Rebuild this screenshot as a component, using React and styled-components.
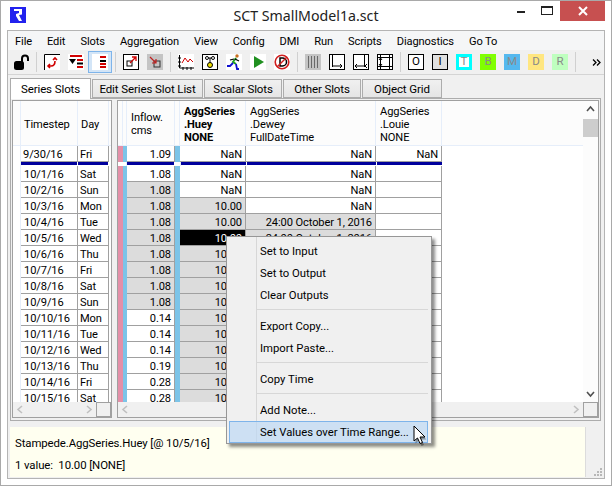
import styled, { createGlobalStyle } from "styled-components";

const GlobalStyle = createGlobalStyle`
  html, body { margin: 0; padding: 0; background: #fff; }
  * { box-sizing: border-box; }
`;

const Window = styled.div`
  position: relative;
  width: 612px;
  height: 486px;
  overflow: hidden;
  display: flex;
  flex-direction: column;
  background: #fff;
  border: 1px solid #a9a9a9;
  font-family: Roboto, "Noto Sans", sans-serif;
  font-size: 11.1px;
  letter-spacing: -0.1px;
  color: #000;
`;

const TitleBar = styled.div`
  height: 29px;
  flex: none;
  display: grid;
  grid-template-columns: 1fr auto 1fr;
`;

const Logo = styled.svg`
  width: 16px;
  height: 16px;
  margin: 6px 0 0 9px;
`;

const Title = styled.div`
  font-family: "Noto Sans", sans-serif;
  font-size: 14.2px;
  letter-spacing: 0;
  line-height: 29px;
  color: #222;
`;

const WinControls = styled.div`
  display: flex;
  justify-content: flex-end;
  margin-right: 6px;
`;

const WinBtn = styled.div`
  width: 26px;
  height: 20px;
  display: flex;
  align-items: center;
  justify-content: center;
`;

const CloseBtn = styled(WinBtn)`
  width: 45px;
  background: #c75050;
`;

const Client = styled.div`
  flex: 1;
  margin: 0 6px 6px 6px;
  border: 1px solid #b4b4b4;
  background: #f0f0f0;
  display: flex;
  flex-direction: column;
  min-height: 0;
`;

const MenuBar = styled.div`
  height: 19px;
  flex: none;
  background: #f5f6f7;
  display: flex;
  align-items: center;
  gap: 15px;
  padding: 2px 0 0 7px;
`;

const Toolbar = styled.div`
  height: 25px;
  flex: none;
  display: flex;
  align-items: center;
  padding-left: 1px;
  border-bottom: 1px solid #d4d4d4;
`;

const ToolBtn = styled.div`
  width: 24px;
  height: 22px;
  flex: none;
  display: flex;
  align-items: center;
  justify-content: center;
  border: 1px solid ${(p) => (p.$active ? "#7eb4ea" : "transparent")};
  background: ${(p) => (p.$active ? "#d3e5f7" : "transparent")};
`;

const ToolSep = styled.div`
  width: 1px;
  height: 20px;
  flex: none;
  margin: 0 3px;
  background: #d0d0d0;
`;

const Icon = styled.svg`
  width: 16px;
  height: 16px;
  display: block;
`;

const LetterBox = styled.div`
  width: 16px;
  height: 16px;
  display: flex;
  align-items: center;
  justify-content: center;
  font-size: 11.5px;
  line-height: 1;
  color: ${(p) => p.$color || "#8a8a8a"};
  background: ${(p) => p.$bg};
  border: ${(p) => p.$border || "none"};
`;

const More = styled.svg`
  width: 9px;
  height: 7px;
  margin-left: 13px;
`;

const TabRow = styled.div`
  height: 21px;
  flex: none;
  margin-top: 2px;
  padding-left: 2px;
  display: flex;
  align-items: flex-end;
  gap: 1px;
`;

const Tab = styled.div`
  width: ${(p) => p.$w}px;
  height: ${(p) => (p.$active ? 21 : 19)}px;
  display: flex;
  align-items: center;
  justify-content: center;
  font-size: 11.5px;
  border: 1px solid #acacac;
  border-bottom: ${(p) => (p.$active ? "none" : "1px solid #acacac")};
  background: ${(p) => (p.$active ? "#fff" : "linear-gradient(#f0f0f0, #e5e5e5)")};
  margin-bottom: ${(p) => (p.$active ? "-1px" : "0")};
  position: relative;
  z-index: ${(p) => (p.$active ? 1 : 0)};
`;

const Pane = styled.div`
  height: 323px;
  flex: none;
  margin-left: 2px;
  width: 591px;
  border: 1px solid #acacac;
  padding: 1px 1px 2px 1px;
  display: flex;
  gap: 5px;
  background: #f0f0f0;
`;

const TableFrame = styled.div`
  width: ${(p) => p.$w}px;
  flex: none;
  border: 1px solid #a0a0a0;
  background: #fff;
  display: grid;
  grid-template-columns: 1fr 15px;
  grid-template-rows: 1fr 15px;
`;

const Body = styled.div`
  min-width: 0;
  min-height: 0;
  overflow: hidden;
  grid-column: ${(p) => (p.$full ? "1 / -1" : "auto")};
`;

const HeaderRow = styled.div`
  height: 45px;
  display: flex;
  background: #fcfcfc;
  border-bottom: 1px solid #e6eefa;
`;

const HeaderCell = styled.div`
  width: ${(p) => p.$w}px;
  flex: none;
  display: flex;
  flex-direction: column;
  justify-content: center;
  padding-top: 2px;
  padding-left: ${(p) => p.$pad ?? 3}px;
  line-height: 13px;
  font-weight: ${(p) => (p.$bold ? 700 : 400)};
  border-right: 1px solid #e6eefa;
`;

const Row = styled.div`
  height: 16px;
  display: flex;
`;

const Cell = styled.div`
  width: ${(p) => p.$w}px;
  flex: none;
  height: 16px;
  line-height: 17px;
  padding: 0 ${(p) => (p.$right ? 3 : 2)}px 0 ${(p) => p.$pad ?? 3}px;
  white-space: nowrap;
  overflow: hidden;
  text-align: ${(p) => (p.$right ? "right" : "left")};
  background: ${(p) => p.$bg || "#fff"};
  color: ${(p) => (p.$bg === "#000" ? "#fff" : "#000")};
  border-right: 1px solid #a0a0a0;
  border-bottom: 1px solid #a0a0a0;
`;

const Stub = styled.div`
  width: ${(p) => p.$w}px;
  flex: none;
  background: ${(p) => p.$bg || "#fff"};
  border-right: ${(p) => (p.$bg ? "none" : "1px solid #e6eefa")};
`;

const FrozenLine = styled.div`
  height: 4px;
  display: flex;
`;

const NavyBar = styled.div`
  width: ${(p) => p.$w}px;
  flex: none;
  height: 3px;
  background: #00009c;
  margin-right: 1px;
`;

const HScroll = styled.div`
  display: flex;
  align-items: center;
  justify-content: space-between;
  padding: 0 3px;
  background: #f0f0f0;
`;

const VScroll = styled.div`
  display: flex;
  flex-direction: column;
  align-items: center;
  background: #fcfcfc;
`;

const Thumb = styled.div`
  width: 15px;
  height: 18px;
  margin-top: 1px;
  background: #cdcdcd;
`;

const Arrow = styled.svg`
  width: 9px;
  height: 9px;
  display: block;
`;

const ArrowSlot = styled.div`
  height: 17px;
  display: flex;
  align-items: center;
  margin-top: ${(p) => (p.$end ? "auto" : "0")};
`;

const Corner = styled.div`
  background: #f0f0f0;
  border: 1px solid #a0a0a0;
`;

const StatusArea = styled.div`
  flex: 1;
  display: flex;
  margin-top: 6px;
  min-height: 0;
`;

const Note = styled.div`
  width: 576px;
  margin-left: 2px;
  margin-bottom: 1px;
  padding: 5px 5px 0;
  background: #fffff0;
  border-right: 1px solid #dcdcdc;
  font-size: 11.4px;
  line-height: 22px;
`;

const Grip = styled.svg`
  width: 8px;
  height: 8px;
  margin: auto 2px 2px auto;
`;

const ContextMenu = styled.div`
  position: absolute;
  left: 225px;
  top: 235px;
  width: 206px;
  height: 208px;
  padding: 3px 3px 0 2px;
  border: 1px solid #979797;
  font-size: 11.3px;
  letter-spacing: 0;
  background:
    linear-gradient(to right, transparent 29px, #d7d7d7 29px, #d7d7d7 30px, transparent 30px),
    #f0f0f0;
  box-shadow: 3px 3px 3px rgba(0, 0, 0, 0.45);
`;

const MenuItem = styled.div`
  height: 22px;
  line-height: 22px;
  padding-left: 30px;
  border: 1px solid ${(p) => (p.$hot ? "#7eb4ea" : "transparent")};
  background: ${(p) => (p.$hot ? "rgba(190, 217, 243, 0.7)" : "transparent")};
`;

const MenuSep = styled.div`
  height: 1px;
  margin: 3px 0 5px 28px;
  background: #d7d7d7;
`;

const Cursor = styled.svg`
  position: absolute;
  left: 412px;
  top: 424px;
  width: 18px;
  height: 24px;
`;

const dates = [
  ["10/1/16", "Sat", "1.08"],
  ["10/2/16", "Sun", "1.08"],
  ["10/3/16", "Mon", "1.08"],
  ["10/4/16", "Tue", "1.08"],
  ["10/5/16", "Wed", "1.08"],
  ["10/6/16", "Thu", "1.08"],
  ["10/7/16", "Fri", "1.08"],
  ["10/8/16", "Sat", "1.08"],
  ["10/9/16", "Sun", "1.08"],
  ["10/10/16", "Mon", "0.14"],
  ["10/11/16", "Tue", "0.14"],
  ["10/12/16", "Wed", "0.14"],
  ["10/13/16", "Thu", "0.19"],
  ["10/14/16", "Fri", "0.28"],
  ["10/15/16", "Sat", "0.28"],
];

const GRAY = "#dcdcdc";
const PINK = "#e48fa8";
const BLUE = "#7cc4e8";

const tabs = [
  ["Series Slots", 81, true],
  ["Edit Series Slot List", 111],
  ["Scalar Slots", 78],
  ["Other Slots", 78],
  ["Object Grid", 80],
];

const menus = ["File", "Edit", "Slots", "Aggregation", "View", "Config", "DMI", "Run", "Scripts", "Diagnostics", "Go To"];

const Lock = () => (
  <Icon viewBox="0 0 16 16">
    <path d="M9 8V4.500a3 3 0 0 1 6 0V7" fill="none" stroke="#000" strokeWidth="2" />
    <rect x="1" y="7" width="10" height="9" rx="2.500" fill="#000" />
  </Icon>
);

const SwapIcon = () => (
  <Icon viewBox="0 0 16 16">
    <rect width="16" height="16" fill="#fff" />
    <path d="M.5 16V.5H16" fill="none" stroke="#000" />
    <path d="M4 12h3c3 0 4-2 4-5M9 6l2-2 2 2M6 10l-2 2 2 2" fill="none" stroke="#d00000" strokeWidth="1.600" />
  </Icon>
);

const FilterIcon = () => (
  <Icon viewBox="0 0 16 16">
    <rect width="16" height="16" fill="#fff" />
    <rect x="2" y="1" width="12" height="2" fill="#d00000" />
    <path d="M1 5h7L4.500 10z" fill="#000" />
    <rect x="9" y="5" width="6" height="2" fill="#d00000" />
    <rect x="9" y="8.500" width="6" height="2" fill="#000" />
    <rect x="9" y="12" width="6" height="2" fill="#d00000" />
  </Icon>
);

const BarsIcon = () => (
  <Icon viewBox="0 0 16 16">
    <rect width="16" height="16" fill="#fff" />
    <rect x="8" y="2" width="6" height="2" fill="#d00000" />
    <rect x="8" y="6" width="6" height="2" fill="#000" />
    <rect x="8" y="9" width="6" height="2" fill="#d00000" />
    <rect x="8" y="12" width="6" height="2" fill="#d00000" />
  </Icon>
);

const OpenBoxIcon = () => (
  <Icon viewBox="0 0 16 16">
    <rect x=".5" y=".5" width="15" height="15" fill="#fff" stroke="#000" />
    <rect x="4" y="7" width="5" height="5" fill="none" stroke="#000" />
    <path d="M7 9l6-6M9 3h4v4" fill="none" stroke="#d00000" strokeWidth="1.300" />
  </Icon>
);

const GrayBoxIcon = () => (
  <Icon viewBox="0 0 16 16">
    <rect width="16" height="16" fill="#c4c4c4" />
    <rect x="7" y="7" width="6" height="6" fill="none" stroke="#333" />
    <path d="M3 3l6 6M9 5v4H5" fill="none" stroke="#c02020" strokeWidth="1.200" />
  </Icon>
);

const ChartIcon = () => (
  <Icon viewBox="0 0 16 16">
    <rect width="16" height="16" fill="#fff" />
    <path d="M1.500 1v13H16M0 12h3M0 8h3M0 4h3M5 16v-3M9 16v-3M13 16v-3" fill="none" stroke="#000" />
    <path d="M4 9l3-5 3 4 2-3 3 3" fill="none" stroke="#d00000" />
  </Icon>
);

const GaugeIcon = () => (
  <Icon viewBox="0 0 16 16">
    <rect x=".5" y=".5" width="15" height="15" fill="#fff" stroke="#000" />
    <circle cx="5" cy="4" r="1.500" fill="none" stroke="#000" />
    <circle cx="11" cy="4" r="1.500" fill="none" stroke="#000" />
    <path d="M6.500 4h3M8 4v5" stroke="#000" />
    <circle cx="8" cy="11" r="2.500" fill="#f0e000" stroke="#000" />
  </Icon>
);

const RunnerIcon = () => (
  <Icon viewBox="0 0 16 16">
    <rect width="16" height="16" fill="#fff" />
    <circle cx="11" cy="2" r="1.700" fill="#c87020" />
    <path d="M10 4L7 8l3 2" fill="none" stroke="#20a020" strokeWidth="2" />
    <path d="M9 5l4 2M8 5L4 6" fill="none" stroke="#000" strokeWidth="1.200" />
    <path d="M7 9l-3 3H1M10 10l1 5h2" fill="none" stroke="#1010d0" strokeWidth="1.800" />
  </Icon>
);

const PlayIcon = () => (
  <Icon viewBox="0 0 16 16">
    <rect width="16" height="16" fill="#fff" />
    <path d="M4 2l10 6-10 6z" fill="#209020" />
  </Icon>
);

const StopIcon = () => (
  <Icon viewBox="0 0 16 16">
    <rect width="16" height="16" fill="#fff" />
    <circle cx="8" cy="8" r="6.800" fill="none" stroke="#d02020" strokeWidth="1.600" />
    <path d="M6 4h2.500a4 4 0 0 1 0 8H6z" fill="none" stroke="#000" strokeWidth="1.500" />
    <path d="M3 13L13 3" stroke="#d02020" strokeWidth="1.400" />
  </Icon>
);

const ColumnsIcon = () => (
  <Icon viewBox="0 0 16 16">
    <rect width="16" height="16" fill="#c4c4c4" />
    <path d="M3.500 2v12M6.500 2v12M9.500 2v12M12.500 2v12" stroke="#6a6a6a" />
  </Icon>
);

const WidthIcon = ({ variant }) => (
  <Icon viewBox="0 0 16 16">
    <rect x=".5" y=".5" width="15" height="15" fill="#fff" stroke="#000" />
    {variant === "grow" && <path d="M3.500 1v12M4 12h9M11 10l2 2-2 2" fill="none" stroke="#000" />}
    {variant === "shrink" && <path d="M11.500 1v12M2 12h9M4 10l-2 2 2 2M14 10l-2 2 2 2" fill="none" stroke="#000" />}
    {variant === "both" && (
      <path d="M3.500 1v14M12.500 1v14M1 3.500h14M1 12.500h14M6 3.500h4M6 12.500h4M5 6l-1.500-2L2 6M5 10l-1.500 2L2 10" fill="none" stroke="#000" />
    )}
  </Icon>
);

const ToolGroup = ({ icons }) =>
  icons.map((node, i) => (
    <ToolBtn key={i} $active={node.active}>
      {node.el}
    </ToolBtn>
  ));

const Chevron = ({ d, color }) => (
  <Arrow viewBox="0 0 9 9">
    <path d={d} fill="none" stroke={color} strokeWidth="1.600" />
  </Arrow>
);

const LEFT = "M6 1L2 4.500 6 8";
const RIGHT = "M3 1l4 3.500L3 8";
const UP = "M1 6l3.500-4L8 6";
const DOWN = "M1 3l3.500 4L8 3";

function LeftTable() {
  return (
    <TableFrame $w={100}>
      <Body $full>
        <HeaderRow>
          <HeaderCell $w={8} />
          <HeaderCell $w={57}>Timestep</HeaderCell>
          <HeaderCell $w={31}>Day</HeaderCell>
        </HeaderRow>
        <Row>
          <Stub $w={8} />
          <Cell $w={57} $pad={2}>9/30/16</Cell>
          <Cell $w={31} $pad={2}>Fri</Cell>
        </Row>
        <FrozenLine>
          <Stub $w={8} />
          <NavyBar $w={56} />
          <NavyBar $w={30} />
        </FrozenLine>
        {dates.map(([d, day]) => (
          <Row key={d}>
            <Stub $w={8} />
            <Cell $w={57}>{d}</Cell>
            <Cell $w={31} $pad={2}>{day}</Cell>
          </Row>
        ))}
      </Body>
      <HScroll>
        <Chevron d={LEFT} color="#c0c0c0" />
        <Chevron d={RIGHT} color="#c0c0c0" />
      </HScroll>
      <Corner />
    </TableFrame>
  );
}

function RightTable() {
  return (
    <TableFrame $w={482}>
      <Body>
        <HeaderRow>
          <HeaderCell $w={5} />
          <HeaderCell $w={4} />
          <HeaderCell $w={48} $pad={4}>
            <span>Inflow.</span>
            <span>cms</span>
          </HeaderCell>
          <HeaderCell $w={5} />
          <HeaderCell $w={66} $pad={4} $bold>
            <span>AggSeries</span>
            <span>.Huey</span>
            <span>NONE</span>
          </HeaderCell>
          <HeaderCell $w={130} $pad={4}>
            <span>AggSeries</span>
            <span>.Dewey</span>
            <span>FullDateTime</span>
          </HeaderCell>
          <HeaderCell $w={66} $pad={4}>
            <span>AggSeries</span>
            <span>.Louie</span>
            <span>NONE</span>
          </HeaderCell>
        </HeaderRow>
        <Row>
          <Stub $w={5} $bg={PINK} />
          <Stub $w={4} $bg={BLUE} />
          <Cell $w={48} $right>1.09</Cell>
          <Stub $w={5} $bg={BLUE} />
          <Cell $w={66} $right>NaN</Cell>
          <Cell $w={130} $right>NaN</Cell>
          <Cell $w={66} $right>NaN</Cell>
        </Row>
        <FrozenLine>
          <Stub $w={9} />
          <NavyBar $w={47} />
          <Stub $w={6} />
          <NavyBar $w={65} />
          <NavyBar $w={129} />
          <NavyBar $w={65} />
        </FrozenLine>
        {dates.map(([d, , flow], i) => {
          const huey = i < 2 ? "NaN" : "10.00";
          const hueyBg = i < 2 ? "#fff" : i === 4 ? "#000" : GRAY;
          const dewey = i < 3 ? "NaN" : i < 5 ? "24:00 October 1, 2016" : "";
          return (
            <Row key={d}>
              <Stub $w={5} $bg={PINK} />
              <Stub $w={4} $bg={BLUE} />
              <Cell $w={48} $right $bg={i > 0 && i < 9 ? GRAY : "#fff"}>{flow}</Cell>
              <Stub $w={5} $bg={BLUE} />
              <Cell $w={66} $right $bg={hueyBg}>{huey}</Cell>
              <Cell $w={130} $right $bg={i === 3 || i === 4 ? GRAY : "#fff"}>{dewey}</Cell>
              <Cell $w={66} />
            </Row>
          );
        })}
      </Body>
      <VScroll>
        <ArrowSlot>
          <Chevron d={UP} color="#505050" />
        </ArrowSlot>
        <Thumb />
        <ArrowSlot $end>
          <Chevron d={DOWN} color="#505050" />
        </ArrowSlot>
      </VScroll>
      <HScroll>
        <Chevron d={LEFT} color="#c0c0c0" />
        <Chevron d={RIGHT} color="#c0c0c0" />
      </HScroll>
      <Corner />
    </TableFrame>
  );
}

export default function App() {
  return (
    <Window>
      <GlobalStyle />
      <TitleBar>
        <Logo viewBox="0 0 16 16">
          <rect width="16" height="16" fill="#2222ee" />
          <path d="M4 2h8v5.500L9 8l3 6H9L6 9V7l3-1V4H4z" fill="#fff" />
        </Logo>
        <Title>SCT SmallModel1a.sct</Title>
        <WinControls>
          <WinBtn>
            <svg width="10" height="10" viewBox="0 0 10 10">
              <rect x="1" y="5" width="8" height="2" fill="#222" />
            </svg>
          </WinBtn>
          <WinBtn>
            <svg width="12" height="10" viewBox="0 0 12 10">
              <rect x=".5" y="1" width="11" height="7.500" fill="none" stroke="#222" />
              <rect x="0" y="0" width="12" height="2" fill="#222" />
            </svg>
          </WinBtn>
          <CloseBtn>
            <svg width="10" height="10" viewBox="0 0 10 10">
              <path d="M1 1l8 8M9 1L1 9" stroke="#fff" strokeWidth="2" />
            </svg>
          </CloseBtn>
        </WinControls>
      </TitleBar>
      <Client>
        <MenuBar>
          {menus.map((m) => (
            <span key={m}>{m}</span>
          ))}
        </MenuBar>
        <Toolbar>
          <ToolBtn><Lock /></ToolBtn>
          <ToolSep />
          <ToolGroup
            icons={[
              { el: <SwapIcon /> },
              { el: <FilterIcon /> },
              { el: <BarsIcon />, active: true },
            ]}
          />
          <ToolSep />
          <ToolGroup icons={[{ el: <OpenBoxIcon /> }, { el: <GrayBoxIcon /> }]} />
          <ToolSep />
          <ToolGroup
            icons={[
              { el: <ChartIcon /> },
              { el: <GaugeIcon /> },
              { el: <RunnerIcon /> },
              { el: <PlayIcon /> },
              { el: <StopIcon /> },
            ]}
          />
          <ToolSep />
          <ToolGroup
            icons={[
              { el: <ColumnsIcon /> },
              { el: <WidthIcon variant="grow" /> },
              { el: <WidthIcon variant="shrink" /> },
              { el: <WidthIcon variant="both" /> },
            ]}
          />
          <ToolSep />
          <ToolBtn><LetterBox $bg="#fff" $color="#000" $border="1px solid #000">O</LetterBox></ToolBtn>
          <ToolBtn><LetterBox $bg="#e0e0e0" $color="#000" $border="1px solid #000">I</LetterBox></ToolBtn>
          <ToolBtn><LetterBox $bg="#fff" $border="3px solid #00ffff">T</LetterBox></ToolBtn>
          <ToolBtn><LetterBox $bg="#80ff00">B</LetterBox></ToolBtn>
          <ToolBtn><LetterBox $bg="#55b8ee">M</LetterBox></ToolBtn>
          <ToolBtn><LetterBox $bg="#ffe680">D</LetterBox></ToolBtn>
          <ToolBtn><LetterBox $bg="#bfffbf">R</LetterBox></ToolBtn>
          <ToolSep />
          <More viewBox="0 0 9 7">
            <path d="M1 .5l3 3-3 3M5 .5l3 3-3 3" fill="none" stroke="#000" strokeWidth="1.300" />
          </More>
        </Toolbar>
        <TabRow>
          {tabs.map(([label, w, active]) => (
            <Tab key={label} $w={w} $active={active}>{label}</Tab>
          ))}
        </TabRow>
        <Pane>
          <LeftTable />
          <RightTable />
        </Pane>
        <StatusArea>
          <Note>
            <div>Stampede.AggSeries.Huey [@ 10/5/16]</div>
            <div>1 value:&nbsp; 10.00 [NONE]</div>
          </Note>
          <Grip viewBox="0 0 8 8">
            <path d="M6 0h2v2H6zM3 3h2v2H3zM6 3h2v2H6zM0 6h2v2H0zM3 6h2v2H3zM6 6h2v2H6z" fill="#b8b8b8" />
          </Grip>
        </StatusArea>
      </Client>
      <ContextMenu>
        <MenuItem>Set to Input</MenuItem>
        <MenuItem>Set to Output</MenuItem>
        <MenuItem>Clear Outputs</MenuItem>
        <MenuSep />
        <MenuItem>Export Copy...</MenuItem>
        <MenuItem>Import Paste...</MenuItem>
        <MenuSep />
        <MenuItem>Copy Time</MenuItem>
        <MenuSep />
        <MenuItem>Add Note...</MenuItem>
        <MenuItem $hot>Set Values over Time Range...</MenuItem>
      </ContextMenu>
      <Cursor viewBox="0 0 18 24">
        <path d="M2.500 3.500v15l3.500-3 2.500 5.500 2.500-1-2.500-5.500h5z" fill="rgba(0,0,0,.35)" />
        <path d="M1 1v15l3.500-3L7 18.500l2.500-1-2.500-5.500h5z" fill="#fff" stroke="#000" />
      </Cursor>
    </Window>
  );
}
